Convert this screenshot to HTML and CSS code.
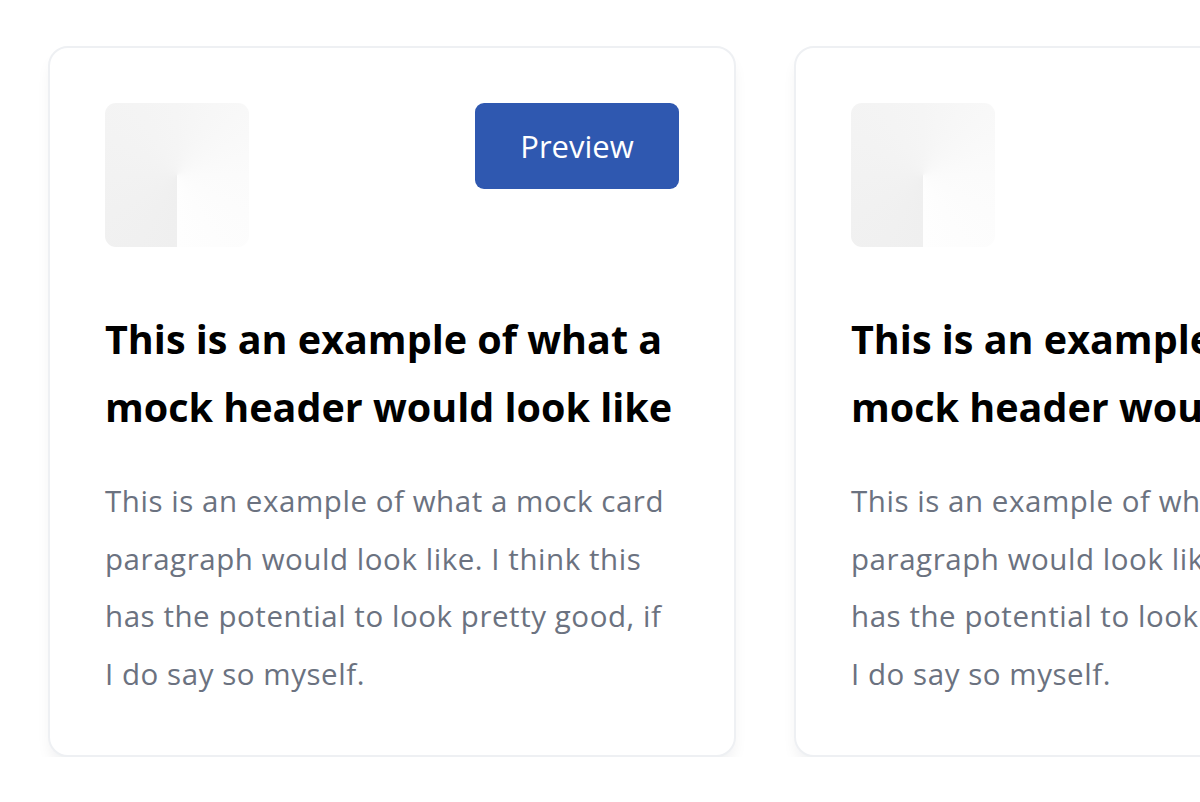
FILE: index.html
```html
<!DOCTYPE html>
<html lang="en">
<head>
<meta charset="utf-8">
<title>Cards</title>
<link rel="stylesheet" href="styles.css">
</head>
<body>
<main class="row">
  <article class="card">
    <div class="card-top">
      <div class="thumb"></div>
      <button class="btn">Preview</button>
    </div>
    <h2 class="title">This is an example of what a mock header would look like</h2>
    <p class="text">This is an example of what a mock card paragraph would look like. I think this has the potential to look pretty good, if I do say so myself.</p>
  </article>
  <article class="card">
    <div class="card-top">
      <div class="thumb"></div>
      <button class="btn">Preview</button>
    </div>
    <h2 class="title">This is an example of what a mock header would look like</h2>
    <p class="text">This is an example of what a mock card paragraph would look like. I think this has the potential to look pretty good, if I do say so myself.</p>
  </article>
</main>
</body>
</html>
```

FILE: styles.css
```css
html, body {
  margin: 0;
  padding: 0;
  background: #ffffff;
  overflow: hidden;
}

body {
  font-family: "Open Sans", "Noto Sans", sans-serif;
}

.row {
  display: flex;
  gap: 58px;
  padding: 46px 0 0 48px;
  width: max-content;
}

.card {
  box-sizing: border-box;
  width: 688px;
  height: 711px;
  border: 2px solid #eef0f3;
  border-radius: 20px;
  background: #fff;
  box-shadow: 0 10px 16px -4px rgba(15, 23, 42, 0.08);
  padding: 55px 55px 0 55px;
}

.card-top {
  display: flex;
  justify-content: space-between;
  align-items: flex-start;
}

.thumb {
  width: 144px;
  height: 144px;
  border-radius: 11px;
  background: conic-gradient(from 180deg at 50% 50%, #efefef, #f5f5f5 50%, #fbfbfb 75%, #fefefe);
}

.btn {
  width: 204px;
  height: 86px;
  border: none;
  border-radius: 9px;
  background: #2f58b0;
  color: #ffffff;
  font-family: "Open Sans", "Noto Sans", sans-serif;
  font-size: 31px;
  padding: 0;
  cursor: pointer;
}

.title {
  margin: 58px 0 0;
  font-size: 39.5px;
  font-weight: 700;
  line-height: 68px;
  color: #000;
}

.text {
  margin: 31px 0 0;
  padding-right: 4px;
  font-size: 29.5px;
  letter-spacing: 0.55px;
  line-height: 57.5px;
  color: #6b7280;
}
```
